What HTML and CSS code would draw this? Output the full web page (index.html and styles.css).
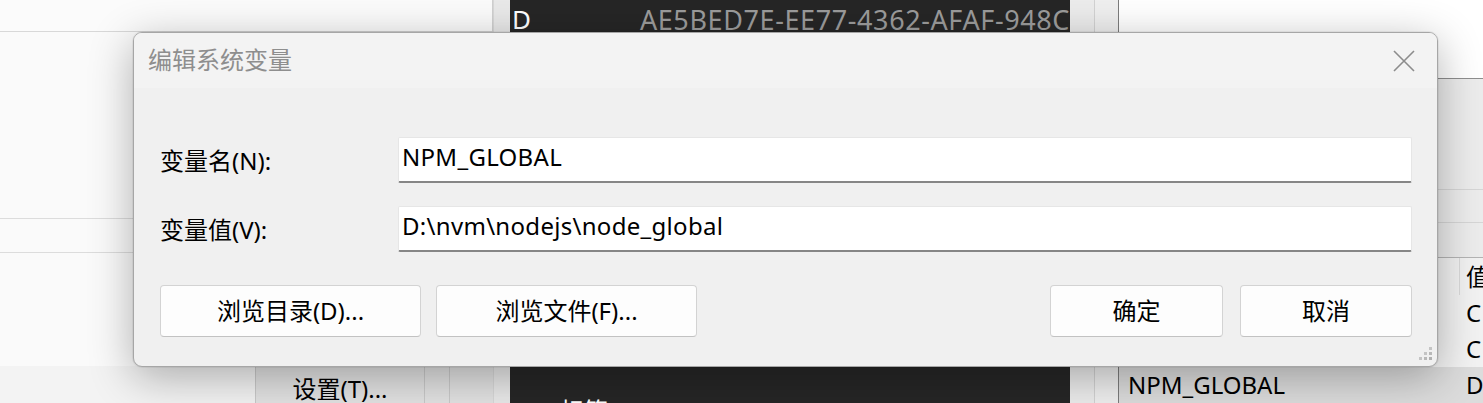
FILE: index.html
```html
<!DOCTYPE html>
<html lang="zh-CN">
<head>
<meta charset="utf-8">
<title>编辑系统变量</title>
<link rel="stylesheet" href="styles.css">
</head>
<body>
<div class="desktop">
  <div class="win-left">
    <div class="wl-top"></div>
    <div class="wl-band wl-band1"></div>
    <div class="wl-band wl-band2"></div>
    <div class="wl-fill"></div>
    <div class="wl-bottom">
      <div class="wl-cell wl-cell-a"></div>
      <div class="wl-cell wl-cell-b">设置(T)...</div>
      <div class="wl-cell wl-cell-c"></div>
      <div class="wl-cell wl-cell-d"></div>
    </div>
  </div>
  <div class="strip-b"><div class="strip-b-top"></div></div>
  <div class="terminal">
    <div class="term-row"><span class="term-key">D</span><span class="term-val">AE5BED7E-EE77-4362-AFAF-948C</span></div>
    <div class="term-bottom"><span class="term-tail">标签</span></div>
  </div>
  <div class="strip-d"><div class="strip-d-a"></div><div class="strip-d-b"></div></div>
  <div class="win-right">
    <div class="wr-top"></div>
    <div class="wr-band wr-band1"></div>
    <div class="wr-band wr-band2"></div>
    <div class="wr-band wr-band3"></div>
    <div class="wr-list">
      <div class="wr-row wr-head"><div class="c-name"></div><div class="c-val c-val-head">值</div></div>
      <div class="wr-row"><div class="c-name"></div><div class="c-val">C</div></div>
      <div class="wr-row"><div class="c-name"></div><div class="c-val">C</div></div>
      <div class="wr-row wr-sel"><div class="c-name">NPM_GLOBAL</div><div class="c-val">D</div></div>
    </div>
  </div>
</div>

<div class="dialog">
  <div class="dlg-title">
    <span class="dlg-title-text">编辑系统变量</span>
    <svg class="dlg-close" width="22" height="22" viewBox="0 0 22 22"><path d="M1 1 L21 21 M21 1 L1 21" stroke="#8c8c8c" stroke-width="1.6" fill="none"/></svg>
  </div>
  <div class="dlg-body">
    <div class="form">
      <label class="f-label">变量名(N):</label>
      <div class="f-input">NPM_GLOBAL</div>
      <label class="f-label">变量值(V):</label>
      <div class="f-input">D:\nvm\nodejs\node_global</div>
    </div>
    <div class="btn-row">
      <div class="btn btn-wide">浏览目录(D)...</div>
      <div class="btn btn-wide">浏览文件(F)...</div>
      <div class="btn-spacer"></div>
      <div class="btn btn-ok">确定</div>
      <div class="btn btn-cancel">取消</div>
    </div>
  </div>
  <svg class="grip" width="14" height="14" viewBox="0 0 14 14">
    <rect x="10" y="0" width="3" height="3" fill="#c4c4c4"/>
    <rect x="5" y="5" width="3" height="3" fill="#c4c4c4"/>
    <rect x="10" y="5" width="3" height="3" fill="#b8b8b8"/>
    <rect x="0" y="10" width="3" height="3" fill="#c4c4c4"/>
    <rect x="5" y="10" width="3" height="3" fill="#b8b8b8"/>
    <rect x="10" y="10" width="3" height="3" fill="#b0b0b0"/>
  </svg>
</div>
</body>
</html>
```
FILE: styles.css
```css
* { box-sizing: border-box; }
html, body {
  margin: 0;
  padding: 0;
  width: 1483px;
  height: 403px;
  overflow: hidden;
  background: #f7f7f7;
  font-family: "Noto Sans", "Noto Sans CJK SC", sans-serif;
  font-size: 24px;
  color: #000;
}

.desktop {
  display: grid;
  grid-template-columns: 493px 17px 560px 49px 364px;
  width: 1483px;
  height: 403px;
}

/* left window */
.win-left {
  display: flex;
  flex-direction: column;
  background: #fafafa;
}
.wl-top {
  height: 32px;
  background: #fbfbfb;
  border-bottom: 1px solid #d8d8d8;
  border-right: 1px solid #d0d0d0;
}
.wl-band1 { height: 187px; border-bottom: 1px solid #dcdcdc; }
.wl-band2 { height: 34px; border-bottom: 1px solid #dcdcdc; }
.wl-fill { flex: 1; }
.wl-bottom {
  height: 37px;
  display: grid;
  grid-template-columns: 255px 169px 25px 44px;
  background: #e2e2e2;
}
.wl-cell {
  border-left: 1px solid #c9c9c9;
  display: flex;
  align-items: center;
  justify-content: center;
  line-height: 1;
  padding-top: 8px;
}
.wl-cell-a { border-left: none; background: #f3f3f3; }

.strip-b {
  background: #e9e9e9;
  border-left: 1px solid #d8d8d8;
}

/* terminal */
.terminal {
  background: #262626;
  display: flex;
  flex-direction: column;
  overflow: hidden;
  color: #fff;
}
.term-row {
  height: 40px;
  display: flex;
  align-items: center;
  padding-left: 2px;
  padding-bottom: 2px;
  white-space: nowrap;
  line-height: 1;
  font-size: 26px;
}
.term-key { width: 148px; }
.term-val { color: #9c9c9c; letter-spacing: 0.6px; font-size: 27px; }
.term-bottom {
  margin-top: auto;
  height: 37px;
  border-top: 1px solid #444;
  padding: 30px 0 0 50px;
  overflow: hidden;
  line-height: 1.2;
}

.strip-d {
  display: grid;
  grid-template-columns: 25px 24px;
}
.strip-d-a { background: #ececec; border-right: 1px solid #d2d2d2; }
.strip-d-b { background: #efefef; border-right: 1px solid #7c7c7c; }

/* right window */
.win-right {
  display: flex;
  flex-direction: column;
  background: #ececec;
}
.wr-top { height: 79px; background: #fff; border-bottom: 1px solid #8e8e8e; }
.wr-band1 { height: 111px; border-bottom: 1px solid #d6d6d6; }
.wr-band2 { height: 33px; border-bottom: 1px solid #d6d6d6; }
.wr-band3 { height: 35px; border-bottom: 1px solid #b4b4b4; }
.wr-list { flex: 1; display: flex; flex-direction: column; background: #f2f2f2; }
.wr-row {
  display: grid;
  grid-template-columns: 340px 1fr;
  height: 36px;
  line-height: 1;
  white-space: nowrap;
}
.wr-head { height: 37px; }
.wr-row > div { display: flex; align-items: center; }
.c-name { padding-left: 9px; }
.c-val { padding-left: 7px; }
.c-val-head { border-left: 1px solid #dadada; padding-left: 6px; }
.wr-sel { background: #dcdcdc; }

/* dialog */
.dialog {
  position: absolute;
  left: 133px;
  top: 32px;
  width: 1305px;
  height: 335px;
  background: #f0f0f0;
  border: 1px solid #a6a6a6;
  border-radius: 9px;
  box-shadow: 0 0 0 1px rgba(0,0,0,0.05), 0 10px 44px rgba(0,0,0,0.30);
  overflow: hidden;
}
.dlg-title {
  height: 55px;
  background: #f3f3f3;
  display: flex;
  align-items: center;
  padding: 0 22px 0 14px;
}
.dlg-title-text {
  flex: 1;
  color: #8e8e8e;
  line-height: 1;
  padding-bottom: 2px;
}
.dlg-close { display: block; }

.dlg-body { padding: 49px 25px 0 26px; }
.form {
  display: grid;
  grid-template-columns: 238px 1fr;
  grid-auto-rows: 46px;
  row-gap: 23px;
}
.f-label {
  display: flex;
  align-items: center;
  line-height: 1;
  padding-top: 1px;
}
.f-input {
  background: #fff;
  border: 1px solid #e6e6e6;
  border-bottom: 2px solid #868686;
  border-radius: 2px;
  display: flex;
  align-items: center;
  padding: 0 0 6px 3px;
  line-height: 1;
  white-space: nowrap;
  letter-spacing: 0.3px;
}

.btn-row {
  display: flex;
  gap: 15px;
  margin-top: 33px;
}
.btn-spacer { flex: 1; }
.btn {
  height: 52px;
  background: #fdfdfd;
  border: 1px solid #d3d3d3;
  border-bottom-color: #c2c2c2;
  border-radius: 4px;
  display: flex;
  align-items: center;
  justify-content: center;
  line-height: 1;
  white-space: nowrap;
}
.btn-wide { width: 261px; }
.btn-ok { width: 173px; margin-right: 2px; }
.btn-cancel { width: 172px; }

.grip {
  position: absolute;
  right: 4px;
  bottom: 5px;
}
```
